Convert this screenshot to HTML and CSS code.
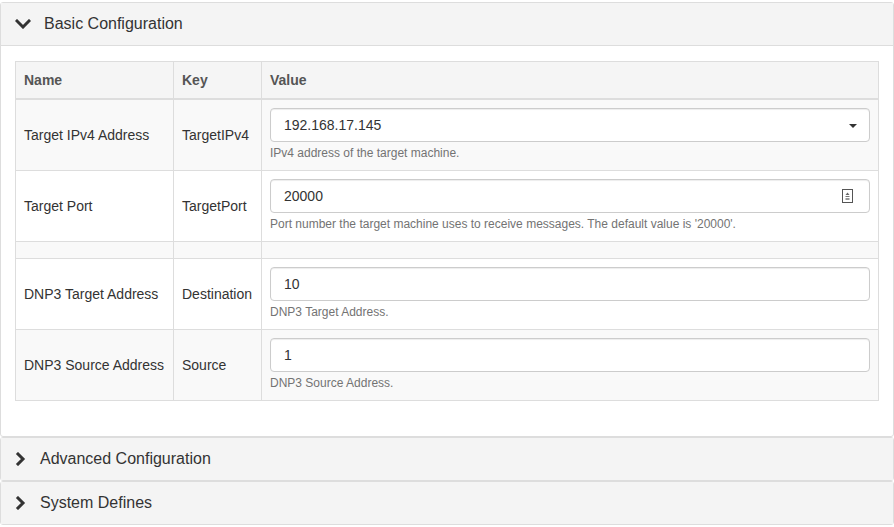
FILE: index.html
```html
<!DOCTYPE html>
<html>
<head>
<meta charset="utf-8">
<link rel="stylesheet" href="styles.css">
</head>
<body>
<div class="page">
  <div class="panel">
    <div class="panel-heading">
      <svg class="chev chev-down" width="16" height="10" viewBox="0 0 16 10"><path d="M2 2 L8 8 L14 2" fill="none" stroke="#333" stroke-width="3" stroke-linecap="square" stroke-linejoin="miter"/></svg>
      <span class="title">Basic Configuration</span>
    </div>
    <div class="panel-body">
      <table class="cfg">
        <colgroup><col class="c-name"><col class="c-key"><col></colgroup>
        <thead>
          <tr><th>Name</th><th>Key</th><th>Value</th></tr>
        </thead>
        <tbody>
          <tr class="odd">
            <td>Target IPv4 Address</td>
            <td>TargetIPv4</td>
            <td>
              <div class="field select">192.168.17.145<span class="caret"></span></div>
              <div class="help">IPv4 address of the target machine.</div>
            </td>
          </tr>
          <tr>
            <td>Target Port</td>
            <td>TargetPort</td>
            <td>
              <div class="field">20000<svg class="spin" width="11" height="14" viewBox="0 0 11 14"><rect x="0.5" y="0.5" width="10" height="13" fill="#fff" stroke="#555"/><path d="M3.5 6 L5.5 3.5 L7.5 6 Z" fill="#666"/><rect x="3.5" y="7" width="4" height="1" fill="#777"/><rect x="3.5" y="9" width="4" height="2" fill="#999"/></svg></div>
              <div class="help">Port number the target machine uses to receive messages. The default value is '20000'.</div>
            </td>
          </tr>
          <tr class="odd empty"><td></td><td></td><td></td></tr>
          <tr>
            <td>DNP3 Target Address</td>
            <td>Destination</td>
            <td>
              <div class="field">10</div>
              <div class="help">DNP3 Target Address.</div>
            </td>
          </tr>
          <tr class="odd">
            <td>DNP3 Source Address</td>
            <td>Source</td>
            <td>
              <div class="field">1</div>
              <div class="help">DNP3 Source Address.</div>
            </td>
          </tr>
        </tbody>
      </table>
    </div>
  </div>
  <div class="panel">
    <div class="panel-heading collapsed">
      <svg class="chev chev-right" width="12" height="14" viewBox="0 0 12 14"><path d="M3 2 L8 7 L3 12" fill="none" stroke="#333" stroke-width="3" stroke-linecap="square"/></svg>
      <span class="title">Advanced Configuration</span>
    </div>
  </div>
  <div class="panel">
    <div class="panel-heading collapsed">
      <svg class="chev chev-right" width="12" height="14" viewBox="0 0 12 14"><path d="M3 2 L8 7 L3 12" fill="none" stroke="#333" stroke-width="3" stroke-linecap="square"/></svg>
      <span class="title">System Defines</span>
    </div>
  </div>
</div>
</body>
</html>
```
FILE: styles.css
```css
* { box-sizing: border-box; }
html, body { margin: 0; padding: 0; background: #fff; }
body {
  font-family: "Liberation Sans", Arial, sans-serif;
  font-size: 14px;
  line-height: 20px;
  color: #333;
}
.page { padding-top: 2px; width: 894px; }
.panel {
  border: 1px solid #ddd;
  border-radius: 3px;
  background: #fff;
}
.panel-heading {
  display: flex;
  align-items: center;
  height: 42px;
  padding-left: 14px;
  background: #f4f4f4;
  font-size: 16px;
  color: #333;
}
.panel > .panel-heading:not(.collapsed) { border-bottom: 1px solid #ddd; height: 43px; }
.chev { flex: none; display: block; }
.chev-down { margin-right: 13px; }
.chev-right { margin-right: 13px; }
.panel-body { padding: 15px 14px 35px; }
table.cfg {
  width: 100%;
  border-collapse: collapse;
  border: 1px solid #ddd;
}
.c-name { width: 158px; }
.c-key { width: 88px; }
.cfg th, .cfg td {
  border: 1px solid #ddd;
  padding: 8px;
  vertical-align: middle;
  text-align: left;
}
.cfg thead th {
  font-weight: bold;
  color: #555;
  background: #f5f5f5;
  border-bottom: 2px solid #ddd;
  line-height: 20px;
}
.cfg tr.odd td { background: #f9f9f9; }
.cfg tr.empty td { height: 17px; padding: 0; }
.field {
  position: relative;
  height: 34px;
  padding: 6px 13px;
  border: 1px solid #ccc;
  border-radius: 4px;
  background: #fff;
  color: #333;
  box-shadow: inset 0 1px 1px rgba(0,0,0,0.075);
  line-height: 20px;
}
.caret {
  position: absolute;
  right: 12px;
  top: 15px;
  width: 0; height: 0;
  border-left: 4px solid transparent;
  border-right: 4px solid transparent;
  border-top: 4px solid #333;
}
.spin {
  position: absolute;
  right: 16px;
  top: 9px;
}
.help {
  margin-top: 3px;
  font-size: 12px;
  line-height: 17px;
  color: #737373;
}
```
